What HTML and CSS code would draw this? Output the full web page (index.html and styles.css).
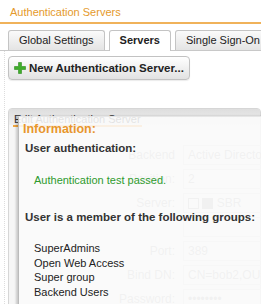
FILE: index.html
```html
<!DOCTYPE html>
<html>
<head>
<meta charset="utf-8">
<link rel="stylesheet" href="styles.css">
</head>
<body>
<div class="page">
  <div class="header">Authentication Servers</div>
  <div class="tabs">
    <div class="tab">Global Settings</div>
    <div class="tab active">Servers</div>
    <div class="tab">Single Sign-On</div>
  </div>
  <div class="content">
    <div class="toolbar">
      <button class="btn">
        <svg class="plus" width="12" height="12" viewBox="0 0 12 12"><path d="M4.5 0.5h3v4h4v3h-4v4h-3v-4h-4v-3h4z" fill="#3fae2a" stroke="#2e8a1e" stroke-width="0.6"/></svg>
        <span>New Authentication Server...</span>
      </button>
    </div>
    <div class="panel">
      <div class="panel-head"><span class="legend">Edit Authentication Server</span></div>
      <div class="form">
        <div class="row"><span class="lbl">Backend</span><span class="val">Active Directory</span></div>
        <div class="row"><span class="lbl">Position:</span><span class="val">2</span></div>
        <div class="row"><span class="lbl">Server:</span><span class="val"><span class="chk"></span> <span class="chk filled"></span> SBR</span></div>
        <div class="row"><span class="lbl"></span><span class="val"></span></div>
        <div class="row"><span class="lbl">Port:</span><span class="val">389</span></div>
        <div class="row"><span class="lbl">Bind DN:</span><span class="val">CN=bob2,OU=Sales</span></div>
        <div class="row"><span class="lbl">Password:</span><span class="val">••••••••</span></div>
      </div>
    </div>
  </div>
  <div class="dialog">
    <div class="dlg-title">Information:</div>
    <div class="dlg-h">User authentication:</div>
    <div class="ok">Authentication test passed.</div>
    <div class="dlg-h groups-h">User is a member of the following groups:</div>
    <ul class="groups">
      <li>SuperAdmins</li>
      <li>Open Web Access</li>
      <li>Super group</li>
      <li>Backend Users</li>
    </ul>
  </div>
</div>
</body>
</html>
```
FILE: styles.css
```css
html, body {
  margin: 0;
  padding: 0;
  background: #fff;
  overflow: hidden;
}
body {
  font-family: "Liberation Sans", Arial, sans-serif;
  font-size: 11px;
  color: #222;
}
.page {
  position: relative;
  width: 261px;
  height: 304px;
  overflow: hidden;
}
.header {
  color: #e59a2c;
  font-size: 11px;
  padding: 6px 0 4px 10px;
  height: 12px;
  border-bottom: 2px solid #f0b25a;
}
.tabs {
  display: flex;
  gap: 4px;
  padding: 6px 0 0 8px;
  border-bottom: 1px solid #c8c8c8;
  white-space: nowrap;
}
.tab {
  height: 19px;
  line-height: 19px;
  padding: 0 10px;
  border: 1px solid #c4c4c4;
  border-bottom: none;
  border-radius: 3px 3px 0 0;
  background: linear-gradient(#fafafa, #e4e4e4);
  color: #222;
  flex: none;
}
.tab.active {
  background: #fff;
  font-weight: bold;
  padding: 0 10px;
  margin-bottom: -1px;
  height: 20px;
}
.content {
  padding: 6px 0 0 6px;
  border-left: 1px dotted #ddd;
  margin-left: 4px;
}
.toolbar {
  display: flex;
}
.btn {
  display: flex;
  align-items: center;
  gap: 3px;
  height: 24px;
  padding: 0 5px 0 5px;
  margin-left: -3px;
  margin-top: -1px;
  border: 1px solid #c2c2c2;
  border-radius: 4px;
  background: linear-gradient(#ffffff, #e2e2e2);
  font-family: "Liberation Sans", Arial, sans-serif;
  font-size: 11.5px;
  font-weight: bold;
  color: #222;
  box-shadow: 0 1px 1px rgba(0,0,0,0.08);
}
.plus { flex: none; }
.panel {
  margin-top: 28px;
  margin-left: -3px;
  border: 1px solid #d6d6d6;
  border-radius: 4px 4px 0 0;
  height: 220px;
  background: #f6f6f6;
}
.panel-head {
  height: 12px;
  background: linear-gradient(#dedede, #f0f0f0);
  padding: 4px 0 0 4px;
}
.legend {
  display: inline-block;
  font-size: 11px;
  color: #333;
  border-bottom: 2px solid #f0a640;
  padding: 0 1px;
  line-height: 12px;
}
.form {
  padding-top: 18px;
}
.row {
  display: flex;
  align-items: center;
  height: 24px;
  font-size: 12px;
  color: #aaa;
}
.lbl {
  width: 166px;
  text-align: right;
  padding-right: 8px;
  flex: none;
}
.val {
  border: 1px solid #ddd;
  height: 18px;
  line-height: 18px;
  padding: 0 4px;
  flex: none;
  width: 120px;
  white-space: nowrap;
}
.chk {
  display: inline-block;
  width: 9px;
  height: 9px;
  border: 1px solid #aaa;
  vertical-align: middle;
}
.chk.filled { background: #aaa; }
.dialog {
  position: absolute;
  left: 18px;
  top: 116px;
  width: 260px;
  height: 200px;
  background: rgba(251,251,251,0.88);
  border-left: 1px solid #bbb;
  border-top: 1px solid #e6e6e6;
  box-shadow: -2px 0 2px rgba(0,0,0,0.18);
  padding: 4px 0 0 4px;
}
.dlg-title {
  color: #e8962c;
  font-weight: bold;
  font-size: 12.5px;
  line-height: 16px;
}
.dlg-h {
  font-weight: bold;
  font-size: 11.5px;
  color: #333;
  margin-top: 5px;
  padding-left: 2px;
}
.ok {
  color: #2e9a2e;
  font-size: 11px;
  margin-top: 20px;
  padding-left: 11px;
}
.groups-h {
  margin-top: 25px;
}
.groups {
  list-style: none;
  margin: 18px 0 0;
  padding: 0 0 0 11px;
  font-size: 11px;
  line-height: 14.7px;
  color: #222;
}
```
